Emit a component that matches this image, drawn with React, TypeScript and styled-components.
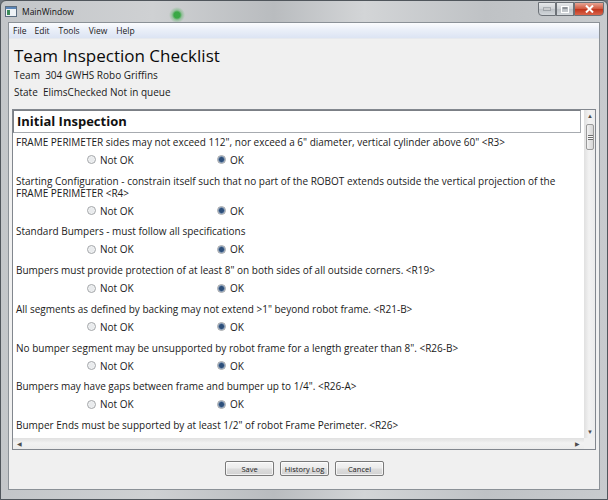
import styled, { createGlobalStyle } from 'styled-components'

const GlobalStyle = createGlobalStyle`
	html, body {
		margin: 0;
		padding: 0;
		background: #707880;
	}
	body {
		font-family: "Open Sans", "Noto Sans", "Liberation Sans", sans-serif;
		color: #1a1a1a;
	}
`

const Window = styled.div`
	width: 608px;
	height: 500px;
	box-sizing: border-box;
	display: flex;
	flex-direction: column;
	padding: 0 7px 9px 7px;
	border: 1px solid #50565c;
	border-radius: 6px 6px 0 0;
	background:
		radial-gradient(circle at 176px 14px, #39a845 0 3px, rgba(57, 168, 69, 0.35) 5px, transparent 8px),
		linear-gradient(90deg, #c3c6c9 0%, #cfd1d3 25%, #b9bcbf 45%, #d3d5d7 60%, #bfc2c5 80%, #c8cbce 100%);
`

const TitleBar = styled.div`
	height: 21px;
	flex: none;
	display: flex;
	align-items: flex-start;
	justify-content: space-between;
`

const TitleLeft = styled.div`
	display: flex;
	align-items: center;
	gap: 5px;
	padding-top: 5px;
	margin-left: -3px;
	font-size: 8.5px;
	color: #111;
`

const Controls = styled.div`
	display: flex;
	margin-right: -4px;
	margin-top: 1px;
`

const CtlButton = styled.div<{ $close?: boolean }>`
	width: ${p => (p.$close ? '30px' : '18px')};
	height: 14px;
	box-sizing: border-box;
	border: 1px solid #6d7278;
	border-radius: ${p => (p.$close ? '0 0 4px 0' : '0')};
	display: flex;
	align-items: center;
	justify-content: center;
	background: ${p =>
		p.$close
			? 'linear-gradient(#e8a493, #d0563c 50%, #c0341b 51%, #d9634a)'
			: 'linear-gradient(#e6e8ea, #cdd1d5 50%, #bcc1c6 51%, #d2d6da)'};
	&:first-child {
		border-radius: 0 0 0 4px;
	}
`

const Client = styled.div`
	flex: 1;
	display: flex;
	flex-direction: column;
	background: #f0f0f0;
	border: 1px solid #8b9197;
`

const MenuBar = styled.div`
	height: 15px;
	display: flex;
	align-items: center;
	gap: 8px;
	padding-left: 4px;
	font-size: 8.5px;
	background: linear-gradient(#fbfcfe, #e9eef8 50%, #dce4f3);
	border-bottom: 1px solid #e6e9ee;
`

const MenuItem = styled.span`
	&:nth-child(n + 3) {
		margin-left: 1px;
	}
`

const Body = styled.div`
	flex: 1;
	display: flex;
	flex-direction: column;
	padding: 0 3px;
`

const Heading = styled.div`
	padding: 6px 0 0 2px;
	font-size: 17px;
	line-height: 22px;
	color: #0a0a0a;
`

const InfoLine = styled.div`
	padding-left: 2px;
	font-size: 10px;
	line-height: 17px;
`

const ScrollArea = styled.div`
	margin-top: 8px;
	height: 341px;
	box-sizing: border-box;
	border: 1px solid #82878e;
	display: grid;
	grid-template-columns: 1fr 11px;
	grid-template-rows: 1fr 11px;
`

const Viewport = styled.div`
	background: #fff;
	overflow: hidden;
	display: flex;
	flex-direction: column;
	gap: 2.75px;
`

const SectionHeader = styled.div`
	margin: 0 3px 0 0;
	height: 23px;
	flex: none;
	box-sizing: border-box;
	border: 1px solid #a7abb0;
	border-top-color: #7b7f85;
	border-left-color: #7b7f85;
	padding-left: 3px;
	font-size: 13px;
	font-weight: 700;
	line-height: 21px;
	color: #111;
`

const Item = styled.div`
	display: flex;
	flex-direction: column;
	flex: none;
`

const ItemText = styled.div`
	padding: 0 12px 0 3px;
	font-size: 10px;
	line-height: 12px;
`

const RadioRow = styled.div`
	height: 24px;
	display: grid;
	grid-template-columns: 130px auto;
	align-items: center;
	padding-left: 74px;
	font-size: 10px;
`

const RadioOption = styled.div`
	display: flex;
	align-items: center;
	gap: 4px;
`

const RadioDot = styled.span<{ $checked?: boolean }>`
	width: 9px;
	height: 9px;
	box-sizing: border-box;
	border-radius: 50%;
	border: 1px solid #a2a5a8;
	background: ${p =>
		p.$checked
			? 'radial-gradient(circle, #2d4f7a 0 2px, #7d95b3 3px, #e9eef2 4px)'
			: 'radial-gradient(circle, #e9ebed 0 2px, #f7f8f9 4px)'};
`

const VScroll = styled.div`
	background: linear-gradient(90deg, #e3e3e3, #f2f2f2 40%, #ececec);
	border-left: 1px solid #e2e2e2;
	display: flex;
	flex-direction: column;
`

const HScroll = styled.div`
	background: linear-gradient(#e3e3e3, #f2f2f2 40%, #ececec);
	border-top: 1px solid #e2e2e2;
	display: flex;
	align-items: center;
	justify-content: space-between;
	padding: 0 4px;
`

const Corner = styled.div`
	background: #f0f0f0;
`

const Arrow = styled.div`
	height: 12px;
	display: flex;
	align-items: center;
	justify-content: center;
	font-size: 6px;
	color: #4d4d4d;
`

const Track = styled.div`
	flex: 1;
`

const Thumb = styled.div`
	margin: 2px 1px 0 1px;
	height: 26px;
	box-sizing: border-box;
	border: 1px solid #9a9a9a;
	border-radius: 2px;
	background: linear-gradient(90deg, #f3f3f3, #e2e2e2 50%, #d6d6d6);
	display: flex;
	align-items: center;
	justify-content: center;
`

const Grip = styled.div`
	width: 5px;
	height: 5px;
	background: repeating-linear-gradient(#6e6e6e 0 1px, #f8f8f8 1px 2px);
`

const ButtonRow = styled.div`
	display: flex;
	justify-content: center;
	gap: 6px;
	padding-top: 11px;
	padding-left: 1px;
`

const PushButton = styled.div`
	width: 49px;
	height: 15px;
	box-sizing: border-box;
	border: 1px solid #7a7a7a;
	border-radius: 2px;
	background: linear-gradient(#f4f4f4, #ececec 45%, #dcdcdc 55%, #d2d2d2);
	box-shadow: inset 0 0 0 1px rgba(255, 255, 255, 0.7);
	display: flex;
	align-items: center;
	justify-content: center;
	font-size: 7.5px;
	line-height: 10px;
	white-space: nowrap;
	color: #222;
`

const AppIcon = () => (
	<svg width="12" height="11" viewBox="0 0 12 11">
		<rect x="0.5" y="0.5" width="11" height="10" fill="#eef2f6" stroke="#5b6d80" />
		<rect x="1" y="1" width="10" height="2" fill="#5b86b8" />
		<rect x="2" y="4" width="3" height="5" fill="#3d8c5a" />
	</svg>
)

type CheckItem = {
	text: string
	ok: boolean
}

const items: CheckItem[] = [
	{ text: 'FRAME PERIMETER sides may not exceed 112", nor exceed a 6" diameter, vertical cylinder above 60" <R3>', ok: true },
	{ text: 'Starting Configuration - constrain itself such that no part of the ROBOT extends outside the vertical projection of the FRAME PERIMETER <R4>', ok: true },
	{ text: 'Standard Bumpers - must follow all specifications', ok: true },
	{ text: 'Bumpers must provide protection of at least 8" on both sides of all outside corners. <R19>', ok: true },
	{ text: 'All segments as defined by backing may not extend >1" beyond robot frame. <R21-B>', ok: true },
	{ text: 'No bumper segment may be unsupported by robot frame for a length greater than 8". <R26-B>', ok: true },
	{ text: 'Bumpers may have gaps between frame and bumper up to 1/4". <R26-A>', ok: true },
	{ text: 'Bumper Ends must be supported by at least 1/2" of robot Frame Perimeter. <R26>', ok: true },
]

export default function App() {
	return (
		<>
			<GlobalStyle />
			<Window>
				<TitleBar>
					<TitleLeft>
						<AppIcon />
						<span>MainWindow</span>
					</TitleLeft>
					<Controls>
						<CtlButton>
							<svg width="8" height="4"><rect x="0" y="1" width="8" height="2" fill="#fff" stroke="#4a5058" strokeWidth="0.6" /></svg>
						</CtlButton>
						<CtlButton>
							<svg width="8" height="7"><rect x="0.5" y="0.5" width="7" height="6" fill="none" stroke="#fff" /><rect x="1.5" y="1.5" width="5" height="1" fill="#4a5058" /></svg>
						</CtlButton>
						<CtlButton $close>
							<svg width="9" height="8" viewBox="0 0 9 8">
								<path d="M1 0.5 L8 7.5 M8 0.5 L1 7.5" stroke="#fff" strokeWidth="2" />
							</svg>
						</CtlButton>
					</Controls>
				</TitleBar>
				<Client>
					<MenuBar>
						<MenuItem>File</MenuItem>
						<MenuItem>Edit</MenuItem>
						<MenuItem>Tools</MenuItem>
						<MenuItem>View</MenuItem>
						<MenuItem>Help</MenuItem>
					</MenuBar>
					<Body>
						<Heading>Team Inspection Checklist</Heading>
						<InfoLine>Team&nbsp; 304 GWHS Robo Griffins</InfoLine>
						<InfoLine>State&nbsp; ElimsChecked Not in queue</InfoLine>
						<ScrollArea>
							<Viewport>
								<SectionHeader>Initial Inspection</SectionHeader>
								{items.map((it, i) => (
									<Item key={i}>
										<ItemText>{it.text}</ItemText>
										<RadioRow>
											<RadioOption>
												<RadioDot $checked={!it.ok} />
												<span>Not OK</span>
											</RadioOption>
											<RadioOption>
												<RadioDot $checked={it.ok} />
												<span>OK</span>
											</RadioOption>
										</RadioRow>
									</Item>
								))}
							</Viewport>
							<VScroll>
								<Arrow>▲</Arrow>
								<Thumb>
									<Grip />
								</Thumb>
								<Track />
								<Arrow>▼</Arrow>
							</VScroll>
							<HScroll>
								<Arrow>◀</Arrow>
								<Arrow>▶</Arrow>
							</HScroll>
							<Corner />
						</ScrollArea>
						<ButtonRow>
							<PushButton>Save</PushButton>
							<PushButton>History Log</PushButton>
							<PushButton>Cancel</PushButton>
						</ButtonRow>
					</Body>
				</Client>
			</Window>
		</>
	)
}
